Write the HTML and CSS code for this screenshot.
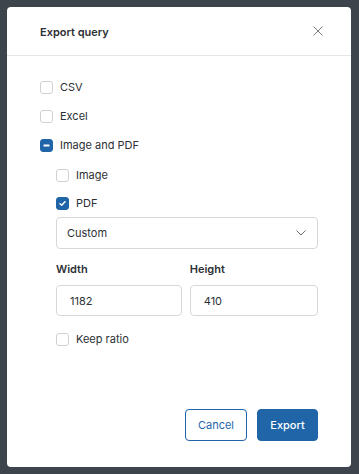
FILE: index.html
```html
<!DOCTYPE html>
<html>
<head>
<meta charset="utf-8">
<link rel="stylesheet" href="styles.css">
</head>
<body>
<div class="dialog">
  <div class="header">
    <span class="title">Export query</span>
    <svg class="close" width="10" height="10" viewBox="0 0 10 10"><path d="M0.5 0.5L9.5 9.5M9.5 0.5L0.5 9.5" stroke="#6a6e73" stroke-width="0.9" fill="none"/></svg>
  </div>
  <div class="body">
    <div class="options">
      <label class="check"><span class="box"></span>CSV</label>
      <label class="check"><span class="box"></span>Excel</label>
      <label class="check"><span class="box on"><svg width="13" height="13" viewBox="0 0 13 13"><rect x="3.5" y="5.5" width="6" height="2" rx="0.5" fill="#fff"/></svg></span>Image and PDF</label>
      <div class="nested">
        <label class="check"><span class="box"></span>Image</label>
        <label class="check"><span class="box on"><svg width="13" height="13" viewBox="0 0 13 13"><path d="M4 6.7L5.7 8.3L9 4.8" stroke="#fff" stroke-width="1.5" fill="none" stroke-linecap="round" stroke-linejoin="round"/></svg></span>PDF</label>
      </div>
    </div>
    <div class="sub">
      <div class="select">
        <span>Custom</span>
        <svg width="10" height="6" viewBox="0 0 10 6"><path d="M0.5 0.5L5 5L9.5 0.5" stroke="#6b6f73" stroke-width="1" fill="none"/></svg>
      </div>
      <div class="dims">
        <div class="field">
          <div class="lbl">Width</div>
          <div class="input">1182</div>
        </div>
        <div class="field">
          <div class="lbl">Height</div>
          <div class="input">410</div>
        </div>
      </div>
      <label class="check ratio"><span class="box"></span>Keep ratio</label>
    </div>
  </div>
  <div class="footer">
    <button class="btn secondary">Cancel</button>
    <button class="btn primary">Export</button>
  </div>
</div>
</body>
</html>
```
FILE: styles.css
```css
html, body {
  margin: 0;
  padding: 0;
}
body {
  background: #3e444b;
  padding: 7px 8px 7px 7px;
  font-family: Inter, "Noto Sans", sans-serif;
  color: #2c3035;
  font-size: 11px;
}
.dialog {
  background: #fff;
  border-radius: 4px;
  height: 460px;
  width: 344px;
  display: flex;
  flex-direction: column;
  box-sizing: border-box;
}
.header {
  height: 49px;
  border-bottom: 1px solid #e3e5e7;
  box-sizing: border-box;
  display: flex;
  align-items: center;
  justify-content: space-between;
  padding: 0 28px 0 33px;
}
.title {
  font-weight: 600;
  font-size: 11px;
  color: #2c3035;
  margin-top: 1px;
}
.close {
  display: block;
}
.body {
  padding: 23px 33px 0 33px;
}
.options {
  display: flex;
  flex-direction: column;
  gap: 12px;
}
.nested {
  display: flex;
  flex-direction: column;
  gap: 11px;
  padding-left: 16px;
  margin-top: 1px;
}
.check {
  display: flex;
  align-items: center;
  height: 17px;
  line-height: 17px;
  gap: 7px;
  color: #2c3035;
}
.box {
  width: 13px;
  height: 13px;
  box-sizing: border-box;
  border: 1px solid #cfd2d5;
  border-radius: 3px;
  background: #fff;
  display: flex;
  align-items: center;
  justify-content: center;
  flex: none;
}
.box.on {
  background: #1f65a8;
  border-color: #1f65a8;
}
.box svg {
  display: block;
  flex: none;
}
.sub {
  padding-left: 16px;
  margin-top: 5px;
}
.select {
  height: 32px;
  box-sizing: border-box;
  border: 1px solid #d5d8db;
  border-radius: 4px;
  display: flex;
  align-items: center;
  justify-content: space-between;
  padding: 0 11px 0 10px;
}
.dims {
  display: flex;
  gap: 8px;
  margin-top: 13px;
}
.field {
  flex: 1;
}
.field:last-child {
  flex: 1.02;
}
.lbl {
  font-weight: 600;
  height: 15px;
  line-height: 15px;
  margin-bottom: 8px;
}
.input {
  height: 31px;
  box-sizing: border-box;
  border: 1px solid #d5d8db;
  border-radius: 4px;
  display: flex;
  align-items: center;
  padding: 0 13px;
}
.ratio {
  margin-top: 15px;
}
.footer {
  margin-top: auto;
  display: flex;
  justify-content: flex-end;
  gap: 10px;
  padding: 0 33px 26px 0;
}
.btn {
  height: 32px;
  border-radius: 4px;
  font-family: Inter, "Noto Sans", sans-serif;
  font-size: 11px;
  box-sizing: border-box;
  padding: 0;
  cursor: pointer;
}
.secondary {
  width: 62px;
  background: #fff;
  border: 1px solid #1f65a8;
  color: #1f65a8;
}
.primary {
  width: 61px;
  background: #1f65a8;
  border: 1px solid #1f65a8;
  color: #fff;
  font-weight: 500;
}
```
